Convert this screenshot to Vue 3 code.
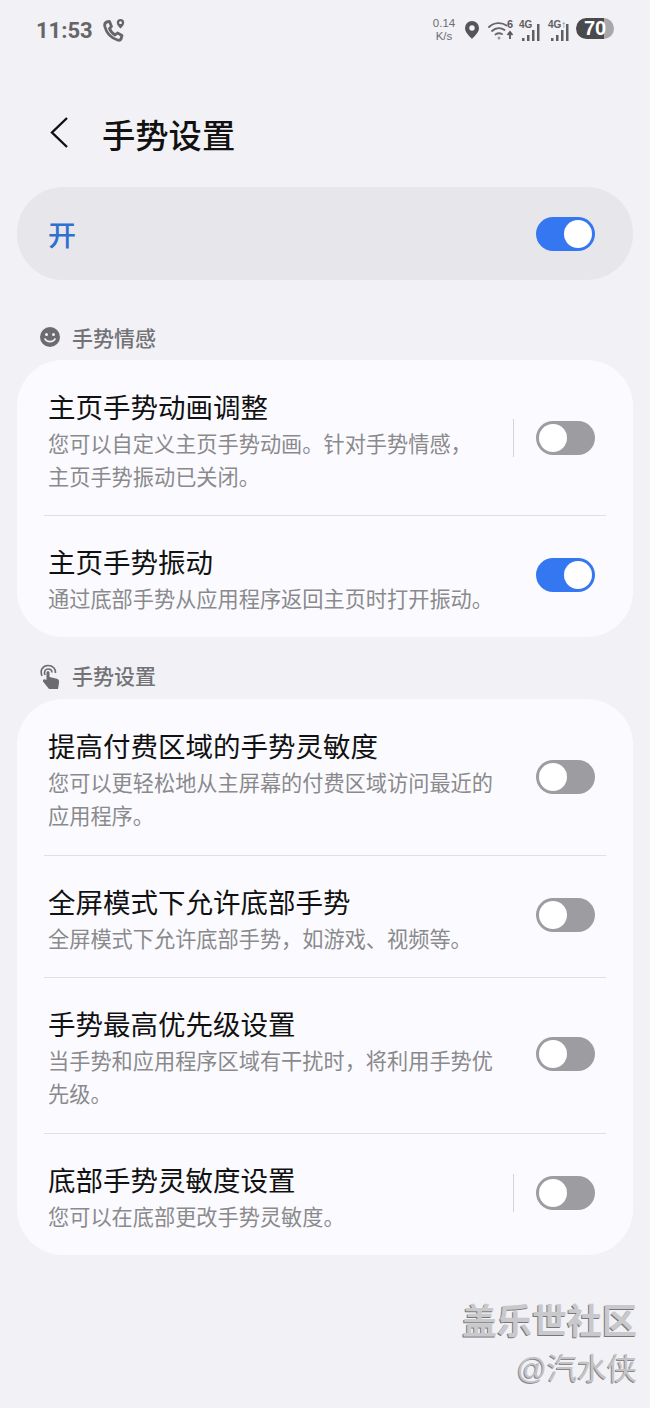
<script setup>
const groups = [
  {
    label: '手势情感',
    icon: 'smile',
    rows: [
      { title: '主页手势动画调整', desc: '您可以自定义主页手势动画。针对手势情感，主页手势振动已关闭。', on: false, split: true },
      { title: '主页手势振动', desc: '通过底部手势从应用程序返回主页时打开振动。', on: true, split: false }
    ]
  },
  {
    label: '手势设置',
    icon: 'touch',
    rows: [
      { title: '提高付费区域的手势灵敏度', desc: '您可以更轻松地从主屏幕的付费区域访问最近的应用程序。', on: false, split: false },
      { title: '全屏模式下允许底部手势', desc: '全屏模式下允许底部手势，如游戏、视频等。', on: false, split: false },
      { title: '手势最高优先级设置', desc: '当手势和应用程序区域有干扰时，将利用手势优先级。', on: false, split: false },
      { title: '底部手势灵敏度设置', desc: '您可以在底部更改手势灵敏度。', on: false, split: true }
    ]
  }
];
</script>

<template>
  <div class="page">
    <div class="status">
      <div class="status-left">
        <span class="clock">11:53</span>
        <svg class="call" width="26" height="26" viewBox="0 0 26 26">
          <path d="M5.500 5 L8.500 4.500 L10.500 9.500 L8.500 11.500 C9.500 14.500 11.500 16.500 14 18 L16.500 16 L21 18.500 L20 22 C19.500 23 18 23.500 16.500 23 C10.500 21 5.500 16 3.800 9.500 C3.400 7.500 4 5.800 5.500 5 Z" fill="none" stroke="#666669" stroke-width="2.800" stroke-linejoin="round" />
          <path d="M19.500 2 a3.700 3.700 0 0 1 3.700 3.700 c0 2.400 -2.400 4.400 -3.700 5.800 c-1.300 -1.400 -3.700 -3.400 -3.700 -5.800 a3.700 3.700 0 0 1 3.700 -3.700 Z M19.500 4.300 a1.400 1.400 0 1 0 0.010 0 Z" fill="#666669" fill-rule="evenodd" />
        </svg>
      </div>
      <div class="status-right">
        <span class="speed">0.14<br />K/s</span>
        <svg class="pin" width="16" height="20" viewBox="0 0 16 20">
          <path d="M8 1 a7 7 0 0 1 7 7 c0 4.500 -4.500 8 -7 11 c-2.500 -3 -7 -6.500 -7 -11 a7 7 0 0 1 7 -7 Z M8 5.200 a2.800 2.800 0 1 0 0.010 0 Z" fill="#555558" fill-rule="evenodd" />
        </svg>
        <svg class="wifi" width="28" height="22" viewBox="0 0 28 22">
          <path d="M1 8 C6 3 14 3 18.500 6.500 M4 12 C8 8.500 13 8.500 16.500 11 M7.500 15.500 C9.500 14 12 14 14 15" fill="none" stroke="#67676a" stroke-width="1.800" stroke-linecap="round" />
          <circle cx="11" cy="19" r="1.500" fill="#9a9a9d" />
          <text x="19" y="9" class="wifi-six">6</text>
          <path d="M22 20 V14 M19.500 16 L22 13 L24.500 16" fill="none" stroke="#58585b" stroke-width="1.800" />
        </svg>
        <div class="signal first">
          <span class="net">4G</span>
          <svg width="22" height="22" viewBox="0 0 22 22">
            <rect x="1" y="17" width="2.500" height="3" fill="#5f5f62" />
            <rect x="6" y="14" width="2.500" height="6" fill="#5f5f62" />
            <rect x="11" y="9" width="2.500" height="11" fill="#5f5f62" />
            <rect x="16" y="3" width="2.500" height="17" fill="#5f5f62" />
          </svg>
        </div>
        <div class="signal">
          <span class="net">4G↑</span>
          <svg width="22" height="22" viewBox="0 0 22 22">
            <rect x="1" y="17" width="2.500" height="3" fill="#5f5f62" />
            <rect x="6" y="14" width="2.500" height="6" fill="#5f5f62" />
            <rect x="11" y="9" width="2.500" height="11" fill="#5f5f62" />
            <rect x="16" y="3" width="2.500" height="17" fill="#5f5f62" />
          </svg>
        </div>
        <div class="battery">70</div>
      </div>
    </div>

    <div class="header">
      <svg class="back" width="24" height="36" viewBox="0 0 24 36">
        <path d="M19 3 L4 17.500 L19 32" fill="none" stroke="#111" stroke-width="2.400" />
      </svg>
      <h1>手势设置</h1>
    </div>

    <div class="master">
      <span>开</span>
      <div class="toggle on"><i></i></div>
    </div>

    <template v-for="group in groups" :key="group.label">
      <div class="section">
        <svg v-if="group.icon === 'smile'" width="22" height="22" viewBox="0 0 22 22">
          <circle cx="11" cy="11" r="10" fill="#6c6c6f" />
          <circle cx="7.500" cy="8.500" r="1.500" fill="#f1f1f6" />
          <circle cx="14.500" cy="8.500" r="1.500" fill="#f1f1f6" />
          <path d="M6 13 C7.500 16.500 14.500 16.500 16 13" fill="none" stroke="#f1f1f6" stroke-width="1.700" stroke-linecap="round" />
        </svg>
        <svg v-else width="22" height="26" viewBox="0 0 22 26">
          <path d="M3 12 C0.500 6 4 1.500 9 1.500 C14 1.500 17 5 16.500 9" fill="none" stroke="#6c6c6f" stroke-width="1.600" />
          <path d="M6 11 C4.500 7.500 6.500 5 9 5 C11.500 5 13 6.500 13 8.500" fill="none" stroke="#6c6c6f" stroke-width="1.600" />
          <path d="M7.500 8.500 C7.500 6.800 10.500 6.800 10.500 8.500 V13 L17 14.500 C19.500 15 20.500 16.500 20 19 L19 25 H10 L4 17.500 C3.500 15.500 5.500 14.500 7.500 16 Z" fill="#6c6c6f" />
        </svg>
        <span>{{ group.label }}</span>
      </div>
      <div class="card" :class="group.icon">
        <div v-for="row in group.rows" :key="row.title" class="row">
          <div class="text" :class="{ short: row.split }">
            <div class="title">{{ row.title }}</div>
            <div class="desc">{{ row.desc }}</div>
          </div>
          <div v-if="row.split" class="split"></div>
          <div class="toggle" :class="{ on: row.on }"><i></i></div>
        </div>
      </div>
    </template>

    <div class="mark">
      <div class="mark-main">盖乐世社区</div>
      <div class="mark-sub">@汽水侠</div>
    </div>
  </div>
</template>

<style>
html,
body {
  margin: 0;
  background: #f1f1f6;
}
</style>

<style scoped>
.page {
  width: 650px;
  height: 1408px;
  overflow: hidden;
  box-sizing: border-box;
  padding: 0 17px;
  background: #f1f1f6;
  font-family: "Liberation Sans", "Noto Sans CJK SC", sans-serif;
  color: #111;
}
.status {
  height: 60px;
  display: flex;
  justify-content: space-between;
  align-items: center;
  padding: 0 19px 0 19px;
  color: #666669;
}
.status-left {
  display: flex;
  align-items: center;
  gap: 8px;
}
.clock {
  font-size: 22px;
  font-weight: 700;
  font-family: Roboto, "Liberation Sans", sans-serif;
}
.status-right {
  display: flex;
  align-items: center;
}
.speed {
  width: 24px;
  font-size: 11.500px;
  line-height: 13px;
  text-align: center;
  color: #6d6d70;
}
.pin {
  margin-left: 8px;
}
.wifi {
  margin-left: 8px;
}
.wifi-six {
  font-size: 11px;
  font-weight: 700;
  fill: #58585b;
}
.signal {
  position: relative;
  width: 24px;
  height: 26px;
  margin-left: 5px;
  display: flex;
  align-items: flex-end;
  justify-content: flex-end;
}
.signal.first {
  margin-left: 3px;
}
.net {
  position: absolute;
  left: 0;
  top: 2px;
  font-size: 10px;
  font-weight: 700;
  color: #5f5f62;
}
.battery {
  width: 38px;
  height: 21px;
  margin: 0 0 3px 4px;
  border-radius: 11px;
  background: linear-gradient(90deg, #4a4a4c 0 74%, #a8a8aa 74%);
  color: #fff;
  font-size: 20px;
  font-weight: 700;
  line-height: 21px;
  text-align: center;
}
.header {
  height: 94px;
  margin-top: 28px;
  display: flex;
  align-items: center;
  padding-left: 31px;
}
.back {
  margin-right: 30px;
  margin-top: -5px;
}
h1 {
  margin: -4px 0 0;
  font-size: 33.300px;
  font-weight: 500;
}
.master {
  margin-top: 5px;
  height: 93px;
  padding: 0 38px 0 31px;
  border-radius: 46px;
  background: #e7e7eb;
  display: flex;
  align-items: center;
  justify-content: space-between;
  color: #2f6fd0;
  font-size: 28px;
  font-weight: 500;
}
.section {
  height: 80px;
  padding: 43px 0 0 22px;
  box-sizing: border-box;
  display: flex;
  align-items: flex-start;
  gap: 11px;
  color: #737376;
  font-size: 21px;
  font-weight: 500;
  line-height: 32px;
}
.section svg {
  margin-top: 3px;
  flex: none;
}
.card {
  background: #fbfbff;
  border-radius: 46px;
  padding: 0 27px;
}
.card + .section {
  height: 62px;
  padding-top: 24px;
}
.row {
  display: flex;
  align-items: center;
  padding: 0 11px 0 4px;
  border-top: 1px solid #e0e0e4;
}
.row:first-child {
  border-top: 0;
}
.row:not(:first-child) .toggle,
.row:not(:first-child) .split {
  margin-top: -3px;
}
.text {
  flex: 1;
  min-width: 0;
  margin-right: 39px;
  padding: 31px 0 21px;
}
.row:first-child .text {
  padding-top: 32px;
}
.card.touch .row:nth-child(odd) .text {
  padding-bottom: 22px;
}
.text.short {
  margin-right: 25px;
}
.title {
  font-size: 27.500px;
  line-height: 34px;
  margin-bottom: 2px;
}
.desc {
  font-size: 21.200px;
  line-height: 33px;
  color: #8a8a8d;
}
.split {
  width: 1px;
  height: 38px;
  margin-right: 22px;
  background: #d4d4d8;
  flex: none;
}
.toggle {
  flex: none;
  box-sizing: border-box;
  width: 59px;
  height: 34px;
  padding: 3px;
  border-radius: 17px;
  background: #9d9da1;
  display: flex;
}
.toggle i {
  width: 28px;
  height: 28px;
  border-radius: 50%;
  background: #fff;
}
.toggle.on {
  background: #3577f0;
  justify-content: flex-end;
}
.mark {
  margin-top: 45px;
  margin-right: -4px;
  text-align: right;
}
.mark-main {
  font-size: 35px;
  line-height: 44px;
  font-weight: 700;
  color: #c9c9cc;
  text-shadow: -1px 1px 0 #77777a;
}
.mark-sub {
  margin-top: 6px;
  font-size: 30px;
  line-height: 38px;
  color: #c4c4c7;
  text-shadow: -1px 1px 0 #88888b;
}
</style>
